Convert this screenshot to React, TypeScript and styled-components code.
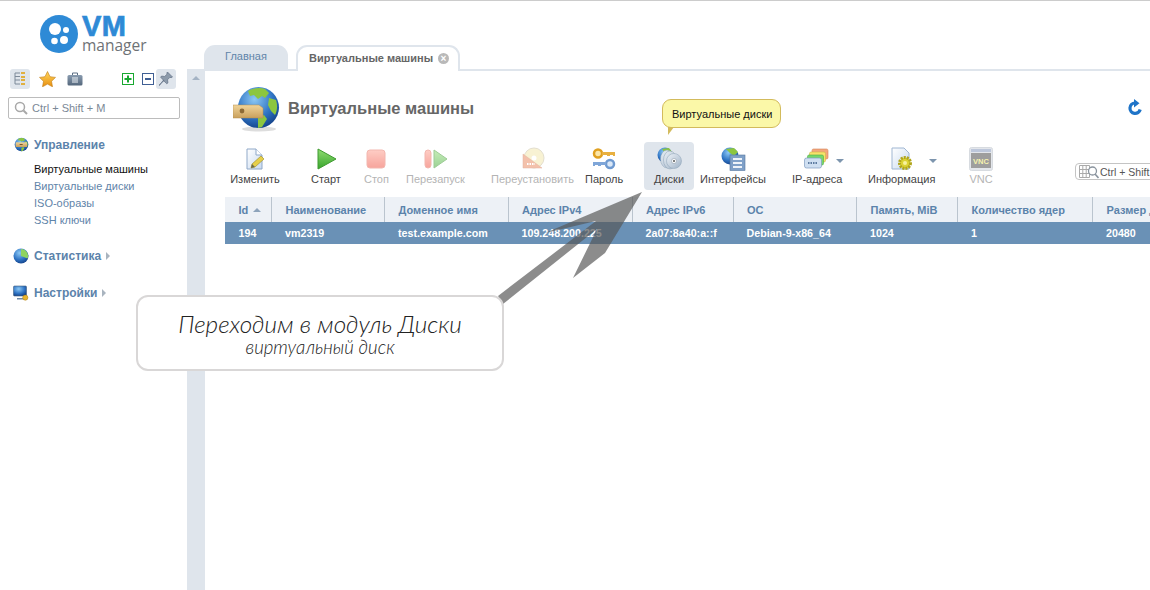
import React from "react";
import styled, { createGlobalStyle } from "styled-components";

const GlobalStyle = createGlobalStyle`
  html, body {
    margin: 0;
    padding: 0;
    background: #fff;
    font-family: "Liberation Sans", Arial, sans-serif;
  }
`;

const Page = styled.div`
  position: relative;
  display: flex;
  width: 1150px;
  height: 590px;
  overflow: hidden;
  border-top: 1px solid #ccc;
  box-sizing: border-box;
`;

const Sidebar = styled.aside`
  width: 187px;
  flex-shrink: 0;
`;

const Logo = styled.div`
  display: flex;
  align-items: flex-start;
  gap: 4px;
  margin: 14px 0 0 40px;
  height: 39px;
`;

const LogoWords = styled.div`
  display: flex;
  flex-direction: column;
  margin-top: 0;
`;

const LogoVm = styled.span`
  font-size: 29px;
  line-height: 23px;
  height: 23px;
  font-weight: 700;
  color: #2e8ad6;
  letter-spacing: 0.3px;
  -webkit-text-stroke: 0.7px #2e8ad6;
`;

const LogoManager = styled.span`
  font-family: "Open Sans", sans-serif;
  font-size: 15.5px;
  line-height: 14px;
  color: #6e7276;
`;

const ToolRow = styled.div`
  display: flex;
  align-items: center;
  height: 20px;
  margin: 15px 0 0 10px;
`;

const ToolButton = styled.div<{ $active?: boolean; $ml?: number }>`
  width: 20px;
  height: 20px;
  display: flex;
  align-items: center;
  justify-content: center;
  border-radius: 3px;
  margin-left: ${(p) => p.$ml ?? 0}px;
  background: ${(p) => (p.$active ? "#dfe5ec" : "transparent")};
`;

const SideSearch = styled.div`
  display: flex;
  align-items: center;
  gap: 4px;
  box-sizing: border-box;
  width: 172px;
  height: 22px;
  margin: 8px 0 0 8px;
  padding-left: 5px;
  border: 1px solid #bcbcbc;
  border-radius: 2px;
  font-size: 11px;
  color: #7b8896;
`;

const NavGroup = styled.div<{ $mb: number }>`
  margin: 0 0 ${(p) => p.$mb}px 13px;
`;

const NavHead = styled.div`
  display: flex;
  align-items: center;
  height: 20px;
  gap: 5px;
  font-size: 12px;
  font-weight: 700;
  color: #5b83ab;
`;

const NavCaret = styled.span`
  width: 0;
  height: 0;
  border-left: 4px solid #a9b4bf;
  border-top: 4px solid transparent;
  border-bottom: 4px solid transparent;
`;

const NavList = styled.div`
  margin: 6px 0 0 21px;
`;

const NavItem = styled.div<{ $current?: boolean }>`
  font-size: 11px;
  line-height: 17px;
  color: ${(p) => (p.$current ? "#111" : "#5f84a9")};
`;

const Nav = styled.nav`
  margin-top: 16px;
`;

const ScrollStrip = styled.div`
  width: 18px;
  flex-shrink: 0;
  margin-top: 68px;
  background: #dfe5ec;
  display: flex;
  justify-content: center;
  padding-top: 7px;
  box-sizing: border-box;
`;

const ScrollUp = styled.span`
  width: 0;
  height: 0;
  border-left: 4px solid transparent;
  border-right: 4px solid transparent;
  border-bottom: 4px solid #a4b3c4;
`;

const Main = styled.main`
  flex: 1;
  min-width: 0;
  padding-top: 44px;
`;

const TabBar = styled.div`
  display: flex;
  align-items: flex-end;
  gap: 8px;
  height: 24px;
  margin-left: -1px;
  border-bottom: 2px solid #dfe5ec;
`;

const Tab = styled.div<{ $active?: boolean }>`
  display: flex;
  align-items: center;
  justify-content: center;
  gap: 5px;
  box-sizing: border-box;
  height: ${(p) => (p.$active ? "26px" : "24px")};
  width: ${(p) => (p.$active ? "164px" : "84px")};
  margin-bottom: ${(p) => (p.$active ? "-2px" : "0")};
  padding: 0 0 2px ${(p) => (p.$active ? "2px" : "0")};
  border-radius: 11px 11px 0 0;
  font-size: 11px;
  color: ${(p) => (p.$active ? "#666" : "#5f84a9")};
  font-weight: ${(p) => (p.$active ? 700 : 400)};
  background: ${(p) => (p.$active ? "#fff" : "#dfe5ec")};
  border: ${(p) => (p.$active ? "2px solid #dfe5ec" : "none")};
  border-bottom: none;
`;

const TabClose = styled.span`
  width: 11px;
  height: 11px;
  border-radius: 50%;
  background: #b9b9b9;
  color: #fff;
  font-size: 10px;
  line-height: 11px;
  text-align: center;
  font-weight: 700;
`;

const Content = styled.div`
  padding: 14px 0 0 20px;
`;

const TitleRow = styled.div`
  display: flex;
  align-items: center;
  height: 48px;
  padding-left: 8px;
`;

const Title = styled.h1`
  margin: -2px 0 0 7px;
  font-size: 16.5px;
  font-weight: 700;
  color: #666;
`;

const Refresh = styled.div`
  margin: -2px 0 0 auto;
  padding-right: 8px;
  display: flex;
`;

const Toolbar = styled.div`
  display: flex;
  height: 48px;
  margin-top: 9px;
`;

const ToolItem = styled.div<{ $w: number; $ml: number; $off?: boolean; $hover?: boolean }>`
  position: relative;
  flex-shrink: 0;
  display: grid;
  grid-template-rows: 24px auto;
  justify-items: center;
  align-items: center;
  align-content: start;
  box-sizing: border-box;
  width: ${(p) => p.$w}px;
  margin-left: ${(p) => p.$ml}px;
  padding-top: 5px;
  border-radius: 4px;
  font-size: 11px;
  white-space: nowrap;
  color: ${(p) => (p.$off ? "#b4b4b4" : "#444")};
  background: ${(p) => (p.$hover ? "#dfe5ec" : "transparent")};
  & > svg {
    opacity: ${(p) => (p.$off ? 0.5 : 1)};
  }
`;

const ToolLabel = styled.span`
  margin-top: 1px;
  line-height: 14px;
`;

const MenuCaret = styled.span`
  position: absolute;
  top: 17px;
  right: -2px;
  width: 0;
  height: 0;
  border-left: 4px solid transparent;
  border-right: 4px solid transparent;
  border-top: 4px solid #7d95ae;
`;

const Tip = styled.div`
  position: absolute;
  left: 18px;
  bottom: 62px;
  box-sizing: border-box;
  width: 119px;
  height: 29px;
  display: flex;
  align-items: center;
  padding-left: 9px;
  background: #fbf8a8;
  border: 1px solid #d3bb5c;
  border-radius: 9px;
  color: #111;
  font-size: 11px;
  &::after {
    content: "";
    position: absolute;
    left: 5px;
    top: 100%;
    width: 0;
    height: 0;
    border-top: 8px solid #d3bb5c;
    border-right: 6px solid transparent;
  }
`;

const Filter = styled.div`
  flex-shrink: 0;
  align-self: flex-end;
  display: flex;
  align-items: center;
  gap: 1px;
  box-sizing: border-box;
  width: 120px;
  height: 17px;
  margin: 0 0 10px 82px;
  padding-left: 3px;
  border: 1px solid #c4c4c4;
  border-radius: 4px;
  font-size: 10.5px;
  color: #555;
  white-space: nowrap;
`;

const Table = styled.table`
  table-layout: fixed;
  width: 1000px;
  margin-top: 7px;
  border-collapse: collapse;
  font-size: 11px;
`;

const HeadCell = styled.th<{ $w: number }>`
  box-sizing: border-box;
  width: ${(p) => p.$w}px;
  height: 25px;
  padding: 0 0 0 13.5px;
  text-align: left;
  font-weight: 700;
  white-space: nowrap;
  overflow: hidden;
  color: #5b83ab;
  background: #edf1f6;
  border-right: 1px solid #bac4ce;
  &:last-child {
    border-right: none;
  }
`;

const SortMark = styled.span`
  display: inline-block;
  margin: 0 0 2px 5px;
  border-left: 4px solid transparent;
  border-right: 4px solid transparent;
  border-bottom: 4px solid #8ea4bb;
`;

const Cell = styled.td`
  height: 22px;
  padding: 0 0 0 13.5px;
  font-weight: 700;
  font-size: 10.7px;
  white-space: nowrap;
  color: #fff;
  background: #6a91b6;
`;

const ArrowLayer = styled.svg`
  position: absolute;
  left: 0;
  top: -1px;
  pointer-events: none;
`;

const Callout = styled.div`
  position: absolute;
  left: 136px;
  top: 294px;
  box-sizing: border-box;
  width: 368px;
  height: 76px;
  display: flex;
  flex-direction: column;
  align-items: center;
  padding-top: 13px;
  background: #fff;
  border: 2px solid #d9d7d7;
  border-radius: 12px;
  font-family: Lato, sans-serif;
  font-style: italic;
  font-weight: 300;
  color: #222;
`;

const CalloutMain = styled.div`
  font-size: 24.3px;
  line-height: 28px;
`;

const CalloutSub = styled.div`
  font-size: 18.6px;
  line-height: 19px;
`;

const Defs = () => (
  <svg width="0" height="0" style={{ position: "absolute" }}>
    <defs>
      <radialGradient id="sea" cx="40%" cy="30%" r="75%">
        <stop offset="0%" stopColor="#8cc8f4" />
        <stop offset="60%" stopColor="#2f74c4" />
        <stop offset="100%" stopColor="#123f86" />
      </radialGradient>
      <linearGradient id="drawer" x1="0" y1="0" x2="0" y2="1">
        <stop offset="0%" stopColor="#f0d49a" />
        <stop offset="100%" stopColor="#c9a05c" />
      </linearGradient>
      <linearGradient id="go" x1="0" y1="0" x2="0" y2="1">
        <stop offset="0%" stopColor="#8fdc72" />
        <stop offset="100%" stopColor="#38a52c" />
      </linearGradient>
      <linearGradient id="stop" x1="0" y1="0" x2="0" y2="1">
        <stop offset="0%" stopColor="#ff9c8c" />
        <stop offset="100%" stopColor="#f04c3c" />
      </linearGradient>
      <linearGradient id="sheet" x1="0" y1="0" x2="1" y2="1">
        <stop offset="0%" stopColor="#ffffff" />
        <stop offset="100%" stopColor="#c8daf0" />
      </linearGradient>
      <linearGradient id="star" x1="0" y1="0" x2="0" y2="1">
        <stop offset="0%" stopColor="#ffd75e" />
        <stop offset="100%" stopColor="#e88f10" />
      </linearGradient>
      <linearGradient id="case" x1="0" y1="0" x2="0" y2="1">
        <stop offset="0%" stopColor="#8a9cb0" />
        <stop offset="100%" stopColor="#54677c" />
      </linearGradient>
      <linearGradient id="disc" x1="0" y1="0" x2="1" y2="1">
        <stop offset="0%" stopColor="#eef3f8" />
        <stop offset="100%" stopColor="#9fb2c6" />
      </linearGradient>
    </defs>
  </svg>
);

const GlobeShapes = () => (
  <>
    <circle cx="25.5" cy="22.5" r="20.5" fill="url(#sea)" />
    <path d="M15 6c5-3 12-4 17-2l4 4-4 5-3-2-4 3-4-4-4 1zM36 13l7 2c2 6 1 11-1 15l-4-4-3-6zM25 33l6-3 3 4-5 8-4 1z" fill="#8cc63f" />
  </>
);

const BigGlobeIcon = () => (
  <svg width="48" height="48" viewBox="0 0 48 48">
    <ellipse cx="26" cy="44" rx="17" ry="2.5" fill="#ddd" />
    <GlobeShapes />
    <path d="M0 20h26l4 3v10H0z" fill="url(#drawer)" stroke="#b58c4c" strokeWidth=".5" />
    <circle cx="9" cy="26" r="2.4" fill="#8d6a35" />
  </svg>
);

const SmallGlobeIcon = () => (
  <svg width="16" height="16" viewBox="0 0 48 48">
    <GlobeShapes />
    <path d="M8 16h34v14H8z" fill="url(#drawer)" />
    <rect x="20" y="21" width="9" height="3" fill="#7a5a2a" />
  </svg>
);

const StatIcon = () => (
  <svg width="16" height="16" viewBox="0 0 16 16">
    <circle cx="8" cy="8" r="7.5" fill="url(#sea)" />
    <path d="M8 1a7 7 0 0 1 6.6 9.5L8 8z" fill="#8fd460" />
  </svg>
);

const SettingsIcon = () => (
  <svg width="16" height="16" viewBox="0 0 16 16">
    <rect x=".5" y="1" width="13" height="10" rx="1" fill="url(#sea)" stroke="#45617f" strokeWidth=".6" />
    <path d="M4 13h7v1.5H4z" fill="#708aa6" />
    <circle cx="12.3" cy="12.6" r="2.6" fill="#e8b52e" stroke="#a97a10" strokeWidth=".5" />
  </svg>
);

const TreeIcon = () => (
  <svg width="14" height="16" viewBox="0 0 14 16">
    <path d="M2 2h5M2 5.500h5M2 2v11M2 9h5M2 13h5" stroke="#7d8a99" fill="none" />
    <path d="M8 1h4v2H8zM8 5h4v2H8zM8 8h4v2H8zM8 12h4v2H8z" fill="#e0b040" />
  </svg>
);

const StarIcon = () => (
  <svg width="17" height="16" viewBox="0 0 17 16">
    <path d="M8.500.5l2.500 5.200 5.500.7-4 3.900 1 5.500-5-2.700-5 2.700 1-5.500-4-3.900 5.500-.7z" fill="url(#star)" stroke="#c07a10" strokeWidth=".6" />
  </svg>
);

const CaseIcon = () => (
  <svg width="16" height="14" viewBox="0 0 16 14">
    <path d="M5.500 3V1h5v2" fill="none" stroke="#5c6f84" />
    <rect x=".5" y="3" width="15" height="10.500" rx="1.500" fill="url(#case)" />
    <path d="M5 6h6M5 8h6M5 10h6" stroke="#eef2f6" />
  </svg>
);

const BoxIcon = ({ color, plus }: { color: string; plus?: boolean }) => (
  <svg width="12" height="12" viewBox="0 0 12 12">
    <rect x=".5" y=".5" width="11" height="11" fill="#fff" stroke={color} />
    <path d={plus ? "M2.500 6h7M6 2.500v7" : "M3 6h6"} stroke={color} strokeWidth="2" />
  </svg>
);

const PinIcon = () => (
  <svg width="16" height="16" viewBox="0 0 16 16">
    <path d="M9.500 1l5 5-1.500.8-1-.6-2.500 2.600.5 3-1.200 1L5.200 9.300 1.500 14.500 1 14l5-4.300L2.600 6.200l1-1.200 3 .5 2.600-2.500-.5-1z" fill="#8d9bab" stroke="#55657a" strokeWidth=".6" />
  </svg>
);

const LensIcon = () => (
  <svg width="14" height="14" viewBox="0 0 14 14">
    <circle cx="6" cy="6" r="4.500" fill="none" stroke="#a8a8a8" strokeWidth="1.500" />
    <path d="M9.500 9.500L13 13" stroke="#a8a8a8" strokeWidth="2" />
  </svg>
);

const EditIcon = () => (
  <svg width="24" height="24" viewBox="0 0 24 24">
    <path d="M4 2h9l6 6v14H4z" fill="url(#sheet)" stroke="#8fa8c8" />
    <path d="M13 2v6h6" fill="#fff" stroke="#8fa8c8" />
    <path d="M8 21l1-4 9-8 3 3-9 8z" fill="#e6cf4a" stroke="#9b8a26" strokeWidth=".6" />
    <path d="M8 21l1-4 3 3z" fill="#6a6a50" />
  </svg>
);

const PlayIcon = () => (
  <svg width="24" height="24" viewBox="0 0 24 24">
    <path d="M4 2l18 10L4 22z" fill="url(#go)" stroke="#3f9a30" strokeLinejoin="round" />
  </svg>
);

const StopIcon = () => (
  <svg width="24" height="24" viewBox="0 0 24 24">
    <rect x="3" y="3" width="18" height="18" rx="3" fill="url(#stop)" stroke="#e87060" />
  </svg>
);

const RestartIcon = () => (
  <svg width="24" height="24" viewBox="0 0 24 24">
    <rect x="1" y="3" width="6" height="18" rx="3" fill="url(#stop)" stroke="#e87060" />
    <path d="M10 3l13 9-13 9z" fill="url(#go)" stroke="#3f9a30" strokeLinejoin="round" />
  </svg>
);

const ReinstallIcon = () => (
  <svg width="24" height="24" viewBox="0 0 24 24">
    <circle cx="13" cy="11" r="10" fill="#f2e6a8" stroke="#c9c0a0" />
    <circle cx="13" cy="11" r="2.500" fill="#fff" />
    <path d="M2 7l19 14H2z" fill="#e8855a" stroke="#c86a40" strokeWidth=".5" />
    <path d="M6 17h8" stroke="#fff" strokeWidth="2" strokeDasharray="1.500 1" />
  </svg>
);

const KeysIcon = () => (
  <svg width="24" height="24" viewBox="0 0 24 24">
    <circle cx="6" cy="6.500" r="4" fill="#fbe6a8" stroke="#e0a020" strokeWidth="2.500" />
    <path d="M10 5h13v4h-2V8h-3v1h-3V8h-5z" fill="#e8b040" />
    <circle cx="18" cy="17" r="4" fill="#dbe8f7" stroke="#6f9ad0" strokeWidth="2.500" />
    <path d="M14 15H1v4h2v-1h3v1h3v-1h5z" fill="#7fa6d8" />
  </svg>
);

const DisksIcon = () => (
  <svg width="26" height="24" viewBox="0 0 26 24">
    <circle cx="9" cy="8" r="7.500" fill="url(#sea)" />
    <path d="M6 2l7-1 3 4-4 4-3-3z" fill="#8cc63f" />
    <ellipse cx="11" cy="12" rx="6.500" ry="9" fill="url(#disc)" stroke="#8ba0b5" strokeWidth=".5" />
    <ellipse cx="14" cy="13" rx="6.500" ry="9" fill="url(#disc)" stroke="#8ba0b5" strokeWidth=".5" />
    <circle cx="18" cy="14" r="7.500" fill="url(#disc)" stroke="#8ba0b5" strokeWidth=".5" />
    <circle cx="18" cy="14" r="2.500" fill="#fff" stroke="#7f8f9f" strokeWidth=".5" />
    <circle cx="18" cy="14" r="1" fill="#555" />
  </svg>
);

const NetIcon = () => (
  <svg width="26" height="24" viewBox="0 0 26 24">
    <circle cx="10" cy="9" r="8.500" fill="url(#sea)" />
    <path d="M6 2l8-1 4 4-4 4-4-3z" fill="#8cc63f" />
    <rect x="10" y="8" width="15" height="15.500" fill="#7fa0c8" stroke="#56779e" strokeWidth=".6" />
    <path d="M13 12h9M13 16h9M13 20h9" stroke="#eef3f9" strokeWidth="2" />
  </svg>
);

const IpIcon = () => (
  <svg width="26" height="22" viewBox="0 0 26 22">
    <rect x="8" y="1" width="16" height="10" rx="1.500" fill="#f3a67c" stroke="#d58558" strokeWidth=".6" />
    <rect x="5.500" y="4" width="16" height="10" rx="1.500" fill="#f7e26a" stroke="#cdb747" strokeWidth=".6" />
    <rect x="3.500" y="7" width="16" height="10" rx="1.500" fill="#76d76a" stroke="#4ead45" strokeWidth=".6" />
    <rect x=".5" y="10" width="17" height="10" rx="2" fill="#cfdff1" stroke="#7f9cc0" strokeWidth=".7" />
    <path d="M4 15h10" stroke="#5d7ba0" strokeWidth="2" strokeDasharray="1.500 1" />
  </svg>
);

const InfoIcon = () => (
  <svg width="24" height="24" viewBox="0 0 24 24">
    <path d="M2 1h12l5 5v16H2z" fill="url(#sheet)" stroke="#9fb6d2" />
    <circle cx="15" cy="16" r="5.500" fill="#dcd335" stroke="#b0a51c" strokeWidth="3" strokeDasharray="2 1" />
    <circle cx="15" cy="16" r="2" fill="#f7f3a0" />
  </svg>
);

const VncIcon = () => (
  <svg width="24" height="24" viewBox="0 0 24 24">
    <rect x=".5" y=".5" width="23" height="23" rx="2" fill="#c8cfd8" stroke="#b0b8c2" />
    <rect x="2" y="2" width="20" height="3" fill="#7d90b8" />
    <rect x="2" y="6" width="20" height="15" fill="#3f3f3f" />
    <text x="12" y="16.500" textAnchor="middle" fontSize="7.500" fontWeight="700" fontFamily="Liberation Sans" fill="#f0e860">VNC</text>
  </svg>
);

const RefreshIcon = () => (
  <svg width="14" height="18" viewBox="0 0 14 18">
    <path d="M7 4a5.200 5.200 0 1 0 5.200 6.500" fill="none" stroke="#1f74c8" strokeWidth="3.200" />
    <path d="M6 0l5.500 4.200L6 8.500z" fill="#1f74c8" />
  </svg>
);

const GridLensIcon = () => (
  <svg width="20" height="14" viewBox="0 0 20 14">
    <path d="M.5.500h10v12H.5zM.5 4.500h10M.5 8.500h10M3.800.5v12M7.200.5v12" fill="none" stroke="#aaa" />
    <circle cx="13.500" cy="6" r="4" fill="#fff" stroke="#8a949e" strokeWidth="1.300" />
    <path d="M16 9l3.500 4" stroke="#8a949e" strokeWidth="1.600" />
  </svg>
);

const columns = [
  { title: "Id", w: 46.5 },
  { title: "Наименование", w: 113 },
  { title: "Доменное имя", w: 123.5 },
  { title: "Адрес IPv4", w: 124 },
  { title: "Адрес IPv6", w: 101 },
  { title: "ОС", w: 123.5 },
  { title: "Память, MiB", w: 101 },
  { title: "Количество ядер", w: 135 },
  { title: "Размер диска", w: 132.5 },
];

const row = ["194", "vm2319", "test.example.com", "109.248.200.225", "2a07:8a40:a::f", "Debian-9-x86_64", "1024", "1", "20480"];

export default function App() {
  return (
    <>
      <GlobalStyle />
      <Defs />
      <Page>
        <Sidebar>
          <Logo>
            <svg width="38" height="38" viewBox="0 0 38 38">
              <circle cx="19" cy="19" r="19" fill="#2e8ad6" />
              <circle cx="15" cy="14" r="6" fill="#fff" />
              <circle cx="26" cy="15" r="3" fill="#fff" />
              <circle cx="14.500" cy="26" r="3.300" fill="#fff" />
              <circle cx="24" cy="25" r="4" fill="#fff" />
            </svg>
            <LogoWords>
              <LogoVm>VM</LogoVm>
              <LogoManager>manager</LogoManager>
            </LogoWords>
          </Logo>
          <ToolRow>
            <ToolButton $active>
              <TreeIcon />
            </ToolButton>
            <ToolButton $ml={7}>
              <StarIcon />
            </ToolButton>
            <ToolButton $ml={8}>
              <CaseIcon />
            </ToolButton>
            <ToolButton $ml={33}>
              <BoxIcon color="#18a830" plus />
            </ToolButton>
            <ToolButton>
              <BoxIcon color="#3f5f94" />
            </ToolButton>
            <ToolButton $active $ml={-2}>
              <PinIcon />
            </ToolButton>
          </ToolRow>
          <SideSearch>
            <LensIcon />
            Ctrl + Shift + M
          </SideSearch>
          <Nav>
            <NavGroup $mb={17}>
              <NavHead>
                <SmallGlobeIcon />
                Управление
              </NavHead>
              <NavList>
                <NavItem $current>Виртуальные машины</NavItem>
                <NavItem>Виртуальные диски</NavItem>
                <NavItem>ISO-образы</NavItem>
                <NavItem>SSH ключи</NavItem>
              </NavList>
            </NavGroup>
            <NavGroup $mb={17}>
              <NavHead>
                <StatIcon />
                Статистика
                <NavCaret />
              </NavHead>
            </NavGroup>
            <NavGroup $mb={0}>
              <NavHead>
                <SettingsIcon />
                Настройки
                <NavCaret />
              </NavHead>
            </NavGroup>
          </Nav>
        </Sidebar>
        <ScrollStrip>
          <ScrollUp />
        </ScrollStrip>
        <Main>
          <TabBar>
            <Tab>Главная</Tab>
            <Tab $active>
              Виртуальные машины
              <TabClose>×</TabClose>
            </Tab>
          </TabBar>
          <Content>
            <TitleRow>
              <BigGlobeIcon />
              <Title>Виртуальные машины</Title>
              <Refresh>
                <RefreshIcon />
              </Refresh>
            </TitleRow>
            <Toolbar>
              <ToolItem $w={50} $ml={5}>
                <EditIcon />
                <ToolLabel>Изменить</ToolLabel>
              </ToolItem>
              <ToolItem $w={29} $ml={31}>
                <PlayIcon />
                <ToolLabel>Старт</ToolLabel>
              </ToolItem>
              <ToolItem $w={24} $ml={24} $off>
                <StopIcon />
                <ToolLabel>Стоп</ToolLabel>
              </ToolItem>
              <ToolItem $w={59} $ml={18} $off>
                <RestartIcon />
                <ToolLabel>Перезапуск</ToolLabel>
              </ToolItem>
              <ToolItem $w={83} $ml={26} $off>
                <ReinstallIcon />
                <ToolLabel>Переустановить</ToolLabel>
              </ToolItem>
              <ToolItem $w={38} $ml={11}>
                <KeysIcon />
                <ToolLabel>Пароль</ToolLabel>
              </ToolItem>
              <ToolItem $w={50} $ml={21} $hover>
                <DisksIcon />
                <ToolLabel>Диски</ToolLabel>
                <Tip>Виртуальные диски</Tip>
              </ToolItem>
              <ToolItem $w={66} $ml={6}>
                <NetIcon />
                <ToolLabel>Интерфейсы</ToolLabel>
              </ToolItem>
              <ToolItem $w={50} $ml={26}>
                <IpIcon />
                <ToolLabel>IP-адреса</ToolLabel>
                <MenuCaret />
              </ToolItem>
              <ToolItem $w={67} $ml={26}>
                <InfoIcon />
                <ToolLabel>Информация</ToolLabel>
                <MenuCaret />
              </ToolItem>
              <ToolItem $w={24} $ml={34} $off>
                <VncIcon />
                <ToolLabel>VNC</ToolLabel>
              </ToolItem>
              <Filter>
                <GridLensIcon />
                Ctrl + Shift + M
              </Filter>
            </Toolbar>
            <Table>
              <thead>
                <tr>
                  {columns.map((c, i) => (
                    <HeadCell key={c.title} $w={c.w}>
                      {c.title}
                      {i === 0 && <SortMark />}
                    </HeadCell>
                  ))}
                </tr>
              </thead>
              <tbody>
                <tr>
                  {row.map((v) => (
                    <Cell key={v}>{v}</Cell>
                  ))}
                </tr>
              </tbody>
            </Table>
          </Content>
        </Main>
        <ArrowLayer width="1150" height="590" viewBox="0 0 1150 590">
          <polygon
            points="642,192 605,253 573,278 597,229 503,304 498,296 596,221 545,233"
            fill="#555"
            fillOpacity="0.68"
          />
        </ArrowLayer>
        <Callout>
          <CalloutMain>Переходим в модуль Диски</CalloutMain>
          <CalloutSub>виртуальный диск</CalloutSub>
        </Callout>
      </Page>
    </>
  );
}
